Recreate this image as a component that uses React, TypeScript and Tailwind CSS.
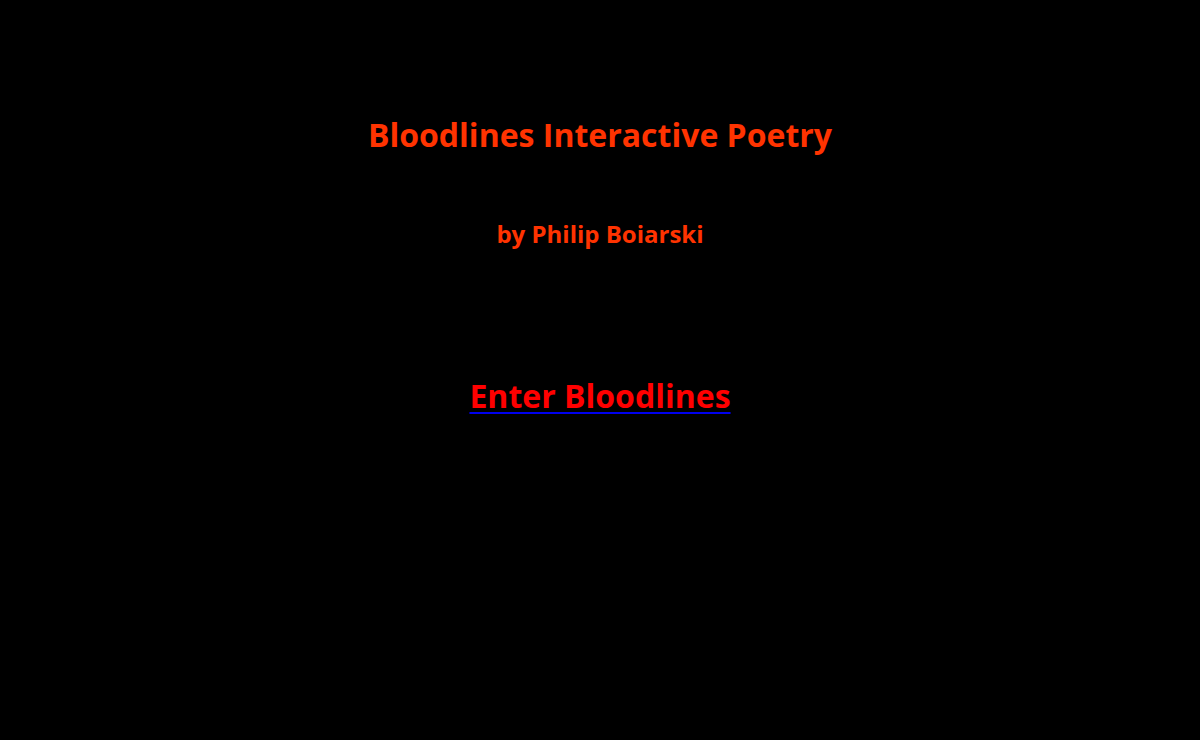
export default function App() {
  return (
    <div
      className="min-h-[740px] w-full bg-black flex flex-col items-center font-bold"
      style={{ fontFamily: '"Open Sans", "Noto Sans", sans-serif' }}
    >
      <h1 className="mt-[112px] text-[32px] leading-[46px] text-[#ff3300]">
        Bloodlines Interactive Poetry
      </h1>
      <h2 className="mt-[59px] text-[24px] leading-[34px] text-[#ff3300]">
        by Philip Boiarski
      </h2>
      <a
        href="#"
        className="mt-[122px] text-[32px] leading-[46px] text-[#0000ee] underline decoration-2 underline-offset-[4px]"
      >
        <span className="text-[#ff0000]">Enter Bloodlines</span>
      </a>
    </div>
  );
}
